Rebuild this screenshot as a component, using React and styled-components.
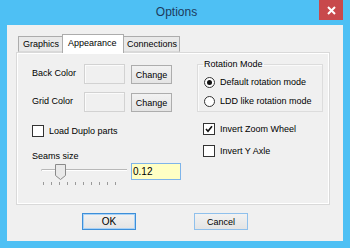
import React from "react";
import styled, { createGlobalStyle } from "styled-components";

const Global = createGlobalStyle`
  html, body { margin: 0; padding: 0; }
  body { width: 350px; height: 248px; overflow: hidden; background: #4ec0f4; font-family: "Liberation Sans", Arial, sans-serif; }
`;

const Window = styled.div`
  width: 350px;
  height: 248px;
  background: #4ec0f4;
  display: flex;
  flex-direction: column;
  box-sizing: border-box;
`;

const TitleBar = styled.div`
  height: 25px;
  display: grid;
  grid-template-columns: 1fr auto 1fr;
  align-items: start;
`;

const Title = styled.div`
  grid-column: 2;
  font-size: 12px;
  line-height: 25px;
  color: #1d3b5c;
  padding-left: 3px;
`;

const CloseBtn = styled.div`
  grid-column: 3;
  justify-self: end;
  margin-right: 7px;
  width: 24px;
  height: 20px;
  background: #c8494c;
  display: flex;
  align-items: center;
  justify-content: center;
`;

const Client = styled.div`
  flex: 1;
  margin: 0 7px 7px 7px;
  background: #f0f0f0;
  padding: 9px 13px 11px 9px;
  display: flex;
  flex-direction: column;
`;

const TabRow = styled.div`
  height: 18px;
  display: flex;
  align-items: flex-end;
  padding-left: 2px;
  position: relative;
  z-index: 2;
`;

const Tab = styled.div`
  box-sizing: border-box;
  width: ${(p) => p.$w}px;
  height: ${(p) => (p.$active ? 19 : 16)}px;
  margin-bottom: ${(p) => (p.$active ? -1 : 0)}px;
  background: ${(p) => (p.$active ? "#ffffff" : "#e9e9e9")};
  border: 1px solid #acacac;
  border-bottom: ${(p) => (p.$active ? "none" : "1px solid #d9d9d9")};
  margin-left: ${(p) => (p.$first ? 0 : -1)}px;
  font-size: 9px;
  line-height: ${(p) => (p.$active ? 17 : 14)}px;
  padding-left: ${(p) => p.$pl}px;
  color: #000;
  white-space: nowrap;
  position: relative;
  z-index: ${(p) => (p.$active ? 2 : 1)};
`;

const Panel = styled.div`
  box-sizing: border-box;
  height: 153px;
  border: 1px solid #d9d9d9;
  box-shadow: inset 1px 1px 0 #ffffff, inset -1px -1px 0 #ffffff;
  background: #f0f0f0;
  padding: 6px 0 0 15px;
  display: grid;
  grid-template-columns: 165px 126px;
  align-items: start;
`;

const LeftCol = styled.div`
  margin-top: 4px;
  display: flex;
  flex-direction: column;
`;

const RightCol = styled.div`
  display: flex;
  flex-direction: column;
`;

const ColorRow = styled.div`
  height: 21px;
  display: flex;
  align-items: center;
  margin-top: ${(p) => p.$mt || 0}px;
`;

const Label = styled.div`
  width: ${(p) => (p.$w ? p.$w + "px" : "auto")};
  font-size: 9px;
  line-height: 11px;
  color: #000;
  white-space: nowrap;
  margin-top: ${(p) => p.$mt || 0}px;
`;

const Swatch = styled.div`
  box-sizing: border-box;
  width: 41px;
  height: 20px;
  border: 1px solid #d2d2d2;
  box-shadow: inset 1px 1px 0 #fbfbfb;
  background: #f0f0f0;
`;

const Button = styled.div`
  box-sizing: border-box;
  width: ${(p) => p.$w}px;
  height: ${(p) => p.$h}px;
  margin-left: ${(p) => p.$ml || 0}px;
  margin-top: ${(p) => p.$mt || 0}px;
  border: 1px solid ${(p) => (p.$default ? "#3d8fd9" : p.$hint ? "#8fc0ec" : "#adadad")};
  box-shadow: ${(p) => (p.$default ? "inset 0 0 0 1px #a9d2f6" : "none")};
  background: linear-gradient(#f2f2f2, #e4e4e4);
  font-size: ${(p) => p.$fs || 9}px;
  color: #000;
  display: flex;
  align-items: center;
  justify-content: center;
  align-self: ${(p) => (p.$alignEnd ? "flex-end" : "auto")};
`;

const CheckRow = styled.div`
  height: 12px;
  display: flex;
  align-items: center;
  gap: 5px;
  margin-top: ${(p) => p.$mt || 0}px;
  margin-left: ${(p) => p.$ml || 0}px;
`;

const Box = styled.div`
  box-sizing: border-box;
  width: 12px;
  height: 12px;
  border: 1px solid #333333;
  background: #ffffff;
  display: flex;
  align-items: center;
  justify-content: center;
`;

const SliderRow = styled.div`
  display: flex;
  align-items: flex-start;
  margin-top: 1px;
  padding-left: 6px;
`;

const Input = styled.div`
  box-sizing: border-box;
  width: 50px;
  height: 17px;
  border: 1px solid #7eb4ea;
  background: #ffffc4;
  font-size: 10px;
  line-height: 15px;
  padding-left: 1px;
  color: #000;
`;

const Group = styled.fieldset`
  box-sizing: border-box;
  width: 126px;
  height: 53px;
  margin: 0;
  border: 1px solid #dcdcdc;
  box-shadow: inset 1px 1px 0 #fafafa;
  padding: 6px 0 0 6px;
  display: flex;
  flex-direction: column;
  gap: 6px;
`;

const Legend = styled.legend`
  font-size: 9px;
  line-height: 11px;
  padding: 0 1px;
  margin-left: -1px;
  color: #000;
`;

const RadioRow = styled.div`
  height: 13px;
  display: flex;
  align-items: center;
  gap: 5px;
`;

const Radio = styled.div`
  box-sizing: border-box;
  width: 11px;
  height: 11px;
  border-radius: 50%;
  border: 1px solid #333333;
  background: #ffffff;
  display: flex;
  align-items: center;
  justify-content: center;
  &::after {
    content: "";
    display: ${(p) => (p.$on ? "block" : "none")};
    width: 5px;
    height: 5px;
    border-radius: 50%;
    background: #111;
  }
`;

const ButtonRow = styled.div`
  display: flex;
  margin-top: 8px;
  padding-left: 66px;
  gap: 58px;
`;

function Check({ on }) {
  return (
    <Box>
      {on && (
        <svg width="8" height="8" viewBox="0 0 8 8">
          <path d="M1 4 L3 6.3 L7 1.2" stroke="#111" strokeWidth="1.6" fill="none" />
        </svg>
      )}
    </Box>
  );
}

function Slider() {
  const ticks = [];
  for (let i = 0; i < 10; i++) ticks.push(5 + i * 8);
  return (
    <svg width="93" height="22" viewBox="0 0 93 22">
      <rect x="3" y="6" width="86" height="1" fill="#b8b8b8" />
      <rect x="3" y="7" width="86" height="1" fill="#ffffff" />
      <rect x="3" y="6" width="1" height="2" fill="#cfcfcf" />
      {ticks.map((x) => (
        <rect key={x} x={x} y="19" width="1" height="3" fill="#9a9a9a" />
      ))}
      <path d="M17.5 1.5 H27.5 V12.5 L22.5 16.5 L17.5 12.5 Z" fill="#e9e9e9" stroke="#8a8a8a" strokeWidth="1" />
    </svg>
  );
}

export default function App() {
  return (
    <>
      <Global />
      <Window>
        <TitleBar>
          <Title>Options</Title>
          <CloseBtn>
            <svg width="9" height="9" viewBox="0 0 9 9">
              <path d="M1 1 L8 8 M8 1 L1 8" stroke="#ffffff" strokeWidth="2" />
            </svg>
          </CloseBtn>
        </TitleBar>
        <Client>
          <TabRow>
            <Tab $w={45} $pl={4} $first>Graphics</Tab>
            <Tab $w={62} $pl={5} $active>Appearance</Tab>
            <Tab $w={57} $pl={3}>Connections</Tab>
          </TabRow>
          <Panel>
            <LeftCol>
              <ColorRow>
                <Label $w={52}>Back Color</Label>
                <Swatch />
                <Button $w={41} $h={19} $ml={6} $mt={2}>Change</Button>
              </ColorRow>
              <ColorRow $mt={7}>
                <Label $w={52}>Grid Color</Label>
                <Swatch />
                <Button $w={41} $h={19} $ml={6} $mt={2}>Change</Button>
              </ColorRow>
              <CheckRow $mt={13}>
                <Check />
                <Label>Load Duplo parts</Label>
              </CheckRow>
              <Label $mt={14}>Seams size</Label>
              <SliderRow>
                <Slider />
                <Input>0.12</Input>
              </SliderRow>
            </LeftCol>
            <RightCol>
              <Group>
                <Legend>Rotation Mode</Legend>
                <RadioRow>
                  <Radio $on />
                  <Label>Default rotation mode</Label>
                </RadioRow>
                <RadioRow>
                  <Radio />
                  <Label>LDD like rotation mode</Label>
                </RadioRow>
              </Group>
              <CheckRow $mt={11} $ml={6}>
                <Check on />
                <Label>Invert Zoom Wheel</Label>
              </CheckRow>
              <CheckRow $mt={10} $ml={6}>
                <Check />
                <Label>Invert Y Axle</Label>
              </CheckRow>
            </RightCol>
          </Panel>
          <ButtonRow>
            <Button $w={54} $h={17} $default $fs={10}>OK</Button>
            <Button $w={54} $h={17} $hint>Cancel</Button>
          </ButtonRow>
        </Client>
      </Window>
    </>
  );
}
